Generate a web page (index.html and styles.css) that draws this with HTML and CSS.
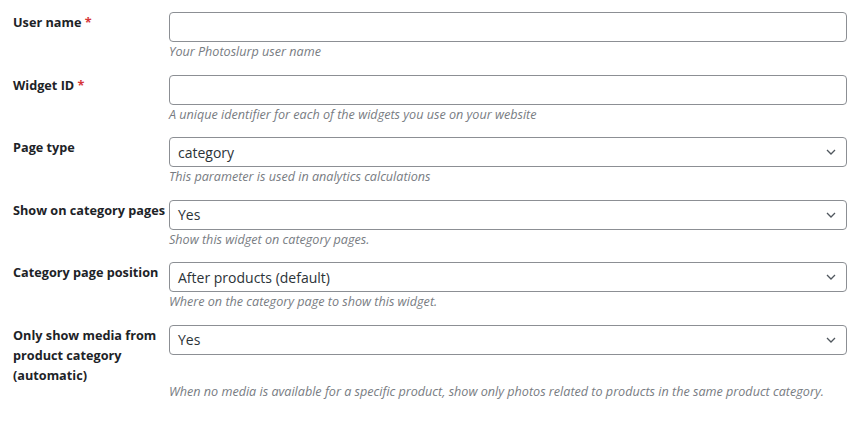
FILE: index.html
```html
<!DOCTYPE html>
<html lang="en">
<head>
<meta charset="utf-8">
<title>Photoslurp settings</title>
<link rel="stylesheet" href="styles.css">
</head>
<body>
<div class="form">
  <div class="row">
    <label class="label">User name <span class="req">*</span></label>
    <div class="field"><input class="input" type="text"></div>
    <p class="desc">Your Photoslurp user name</p>
  </div>
  <div class="row">
    <label class="label">Widget ID <span class="req">*</span></label>
    <div class="field"><input class="input" type="text"></div>
    <p class="desc">A unique identifier for each of the widgets you use on your website</p>
  </div>
  <div class="row">
    <label class="label">Page type</label>
    <div class="field"><div class="select"><span>category</span><svg class="chev" viewBox="0 0 10 6" width="10" height="6"><path d="M1 1l4 4 4-4" fill="none" stroke="#50575e" stroke-width="1.3"/></svg></div></div>
    <p class="desc">This parameter is used in analytics calculations</p>
  </div>
  <div class="row">
    <label class="label">Show on category pages</label>
    <div class="field"><div class="select"><span>Yes</span><svg class="chev" viewBox="0 0 10 6" width="10" height="6"><path d="M1 1l4 4 4-4" fill="none" stroke="#50575e" stroke-width="1.3"/></svg></div></div>
    <p class="desc">Show this widget on category pages.</p>
  </div>
  <div class="row">
    <label class="label">Category page position</label>
    <div class="field"><div class="select"><span>After products (default)</span><svg class="chev" viewBox="0 0 10 6" width="10" height="6"><path d="M1 1l4 4 4-4" fill="none" stroke="#50575e" stroke-width="1.3"/></svg></div></div>
    <p class="desc">Where on the category page to show this widget.</p>
  </div>
  <div class="row">
    <label class="label label-tall">Only show media from product category (automatic)</label>
    <div class="field"><div class="select"><span>Yes</span><svg class="chev" viewBox="0 0 10 6" width="10" height="6"><path d="M1 1l4 4 4-4" fill="none" stroke="#50575e" stroke-width="1.3"/></svg></div></div>
    <p class="desc">When no media is available for a specific product, show only photos related to products in the same product category.</p>
  </div>
</div>
</body>
</html>
```
FILE: styles.css
```css
html, body {
  margin: 0;
  padding: 0;
  background: #ffffff;
}
body {
  font-family: "Open Sans", "Noto Sans", sans-serif;
  color: #1d2327;
}
.form {
  padding: 12px 15px 0 13px;
  display: flex;
  flex-direction: column;
  gap: 13.6px;
}
.row {
  display: grid;
  grid-template-columns: 156px 678px;
  grid-template-rows: auto auto;
}
.label {
  grid-column: 1;
  grid-row: 1;
  font-size: 12.7px;
  font-weight: 700;
  line-height: 20px;
  color: #1d2327;
}
.label-tall {
  margin-bottom: -3px;
}
.req {
  color: #d63638;
}
.field {
  grid-column: 2;
  grid-row: 1;
}
.input, .select {
  box-sizing: border-box;
  width: 678px;
  height: 30px;
  border: 1px solid #8c8f94;
  border-radius: 4px;
  background: #fff;
  margin: 0;
  display: block;
}
.select {
  display: flex;
  align-items: center;
  justify-content: space-between;
  padding: 0 10px 0 8px;
  font-size: 14px;
  color: #2c3338;
}
.chev {
  display: block;
}
.desc {
  grid-column: 2;
  grid-row: 2;
  margin: 0;
  padding-top: 1px;
  font-size: 12.6px;
  font-style: italic;
  line-height: 18px;
  color: #787c82;
}
```
